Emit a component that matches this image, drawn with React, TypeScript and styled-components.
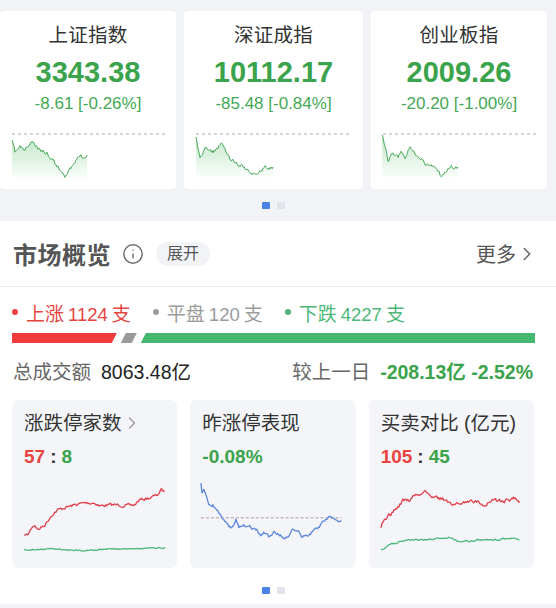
import React from "react";
import styled, { createGlobalStyle } from "styled-components";
import { ChevronRight, Info } from "lucide-react";

const GlobalStyle = createGlobalStyle`
  html, body { margin: 0; padding: 0; background: #ffffff; }
  body {
    font-family: "Liberation Sans", "Noto Sans CJK SC", sans-serif;
    -webkit-font-smoothing: antialiased;
  }
  #root { width: 556px; }
`;

type Pt = [number, number];

function buildLine(anchors: Pt[], amp: number, seed: number, step = 1): Pt[] {
  let s = seed;
  const rnd = () => {
    s = (s * 16807) % 2147483647;
    return s / 2147483647;
  };
  const pts: Pt[] = [];
  let dev = 0;
  for (let i = 0; i < anchors.length - 1; i++) {
    const [x0, y0] = anchors[i];
    const [x1, y1] = anchors[i + 1];
    const n = Math.max(1, Math.round((x1 - x0) / step));
    for (let k = 0; k < n; k++) {
      const t = k / n;
      dev = dev * 0.5 + (rnd() - 0.5) * amp;
      pts.push([x0 + (x1 - x0) * t, y0 + (y1 - y0) * t + (i === 0 && k === 0 ? 0 : dev)]);
    }
  }
  pts.push(anchors[anchors.length - 1]);
  return pts;
}

const toPath = (pts: Pt[]) =>
  "M" + pts.map((p) => `${p[0].toFixed(1)},${p[1].toFixed(1)}`).join("L");

const toArea = (pts: Pt[], bottom: number) =>
  toPath(pts) +
  `L${pts[pts.length - 1][0].toFixed(1)},${bottom}L${pts[0][0].toFixed(1)},${bottom}Z`;

/* ---------- data ---------- */

const indices = [
  {
    name: "上证指数",
    value: "3343.38",
    change: "-8.61 [-0.26%]",
    anchors: [
      [12, 10], [15, 22], [20, 17], [25, 20], [32, 12], [37, 18], [47, 23], [53, 30],
      [58, 37], [65, 45], [70, 40], [75, 33], [80, 25], [85, 27], [87, 25],
    ] as Pt[],
    seed: 11,
  },
  {
    name: "深证成指",
    value: "10112.17",
    change: "-85.48 [-0.84%]",
    anchors: [
      [12, 7], [16, 28], [21, 20], [29, 22], [34, 17], [38, 14], [46, 28], [56, 35],
      [64, 40], [68, 45], [74, 45], [78, 40], [82, 37], [86, 38], [89, 37],
    ] as Pt[],
    seed: 29,
  },
  {
    name: "创业板指",
    value: "2009.26",
    change: "-20.20 [-1.00%]",
    anchors: [
      [11, 5], [17, 30], [22, 23], [27, 28], [30, 20], [34, 27], [39, 17], [45, 25],
      [49, 28], [54, 33], [61, 35], [66, 40], [69, 45], [72, 45], [77, 38], [81, 36],
      [84, 38], [87, 37],
    ] as Pt[],
    seed: 47,
  },
];

const limitRed = buildLine(
  [
    [12, 57], [16, 57], [20, 49], [23, 47], [26, 52], [33, 47], [40, 37], [46, 32],
    [56, 29], [63, 27], [73, 25], [83, 25], [88, 28], [98, 27], [108, 27], [113, 28],
    [123, 27], [128, 22], [138, 20], [146, 17], [150, 12], [153, 14],
  ],
  2.6,
  7
);
const limitGreen = buildLine(
  [[12, 72], [40, 71], [70, 73], [100, 71], [130, 71], [154, 70]],
  1,
  13
);
const yesterdayBlue = buildLine(
  [
    [11, 5], [12, 17], [14, 12], [17, 22], [19, 27], [23, 27], [26, 32], [31, 37],
    [34, 42], [39, 50], [44, 49], [46, 41], [49, 49], [54, 47], [59, 49], [67, 52],
    [71, 57], [74, 54], [79, 59], [84, 55], [89, 57], [94, 60], [99, 57], [104, 52],
    [109, 54], [112, 59], [119, 58], [124, 52], [129, 49], [134, 44], [139, 40],
    [142, 39], [146, 40], [149, 44], [152, 43],
  ],
  2.8,
  23
);
const flowRed = buildLine(
  [
    [12, 50], [16, 42], [21, 37], [26, 32], [31, 27], [34, 22], [41, 22], [46, 17],
    [51, 17], [56, 14], [61, 17], [66, 20], [76, 22], [81, 25], [86, 27], [91, 25],
    [101, 22], [109, 24], [116, 27], [126, 22], [134, 24], [141, 22], [146, 20], [151, 25],
  ],
  3.4,
  31
);
const flowGreen = buildLine(
  [
    [12, 72], [21, 67], [31, 64], [41, 62], [61, 62], [81, 60], [91, 64], [111, 62],
    [131, 62], [141, 60], [151, 62],
  ],
  1.5,
  37
);

const breadth = { up: 1124, flat: 120, down: 4227 };

/* ---------- styles ---------- */

const Page = styled.div`
  width: 556px;
  background: #ffffff;
`;

const TopSection = styled.section`
  background: #f1f3f7;
  padding: 11px 0 12px 0;
`;

const IndexRow = styled.div`
  display: grid;
  grid-template-columns: 176px 179px 176px;
  column-gap: 8px;
`;

const IndexCard = styled.div`
  background: #ffffff;
  border-radius: 4px;
  height: 178px;
  box-sizing: border-box;
  padding-top: 10px;
  display: flex;
  flex-direction: column;
  align-items: center;
`;

const IndexName = styled.div`
  font-size: 19.5px;
  line-height: 28px;
  color: #333333;
  letter-spacing: 0.3px;
`;

const IndexValue = styled.div`
  margin-top: 5px;
  font-size: 29px;
  line-height: 36px;
  font-weight: 700;
  color: #3ba34c;
`;

const IndexChange = styled.div`
  margin-top: 3px;
  font-size: 17px;
  line-height: 22px;
  color: #44a856;
`;

const MiniChart = styled.svg`
  margin-top: 15px;
  width: 100%;
  height: 50px;
  display: block;
`;

const Dots = styled.div`
  display: flex;
  justify-content: center;
  gap: 7px;
  padding-right: 9px;
`;

const Dot = styled.span<{ $active?: boolean }>`
  width: 8px;
  height: 7px;
  border-radius: 1px;
  background: ${(p) => (p.$active ? "#4c82e6" : "#e1e4ea")};
`;

const TopDots = styled(Dots)`
  margin-top: 13px;
`;

const Overview = styled.section`
  background: #ffffff;
  padding-bottom: 10px;
`;

const Header = styled.div`
  height: 65px;
  display: flex;
  align-items: center;
  padding: 0 18px 0 13px;
  border-bottom: 1px solid #ececec;
`;

const HeaderTitle = styled.h2`
  margin: 0;
  font-size: 24px;
  font-weight: 600;
  color: #555555;
  letter-spacing: 0.5px;
`;

const InfoIcon = styled(Info)`
  margin-left: 11px;
  color: #6f6f6f;
`;

const Pill = styled.span`
  margin-left: 12px;
  height: 24px;
  padding: 0 11px;
  border-radius: 12px;
  background: #f2f3f6;
  color: #555555;
  font-size: 16px;
  line-height: 24px;
`;

const More = styled.span`
  margin-left: auto;
  display: flex;
  align-items: center;
  font-size: 20px;
  color: #555555;
`;

const Stats = styled.div`
  margin-top: 13px;
  height: 24px;
  display: flex;
  align-items: center;
  gap: 22px;
  padding-left: 12px;
`;

const StatItem = styled.span<{ $color: string }>`
  display: flex;
  align-items: center;
  gap: 8px;
  font-size: 19px;
  color: ${(p) => p.$color};
  &::before {
    content: "";
    width: 6px;
    height: 6px;
    border-radius: 50%;
    background: ${(p) => p.$color};
  }
`;

const StatCount = styled.span`
  font-family: "Liberation Sans", "Noto Sans", sans-serif;
  font-size: 18.5px;
  margin: 0 4px;
`;

const Bar = styled.div`
  margin: 9px 21px 0 12px;
  height: 10px;
  display: flex;
  gap: 4px;
`;

const Seg = styled.div<{ $color: string; $shape: "start" | "mid" | "end"; $grow: number }>`
  flex: ${(p) => p.$grow} 1 0;
  min-width: 16px;
  background: ${(p) => p.$color};
  clip-path: ${(p) =>
    p.$shape === "start"
      ? "polygon(0 0, 100% 0, calc(100% - 5px) 100%, 0 100%)"
      : p.$shape === "mid"
      ? "polygon(5px 0, 100% 0, calc(100% - 5px) 100%, 0 100%)"
      : "polygon(5px 0, 100% 0, 100% 100%, 0 100%)"};
`;

const Turnover = styled.div`
  margin-top: 15px;
  height: 24px;
  display: flex;
  align-items: center;
  justify-content: space-between;
  padding: 0 23px 0 13px;
  font-size: 19.5px;
`;

const Group = styled.span`
  display: flex;
  align-items: center;
  gap: 10px;
`;

const Label = styled.span`
  color: #666666;
`;

const Amount = styled.span<{ $color?: string }>`
  color: ${(p) => p.$color || "#222222"};
  font-weight: ${(p) => (p.$color ? 600 : 400)};
`;

const CardRow = styled.div`
  margin-top: 18px;
  display: grid;
  grid-template-columns: repeat(3, 1fr);
  column-gap: 13px;
  padding: 0 22px 0 12px;
`;

const StatCard = styled.div`
  background: #f3f5f9;
  border-radius: 6px;
  padding: 10px 0 10px 0;
  display: flex;
  flex-direction: column;
`;

const CardTitle = styled.div`
  display: flex;
  align-items: center;
  padding-left: 12px;
  font-size: 19.5px;
  line-height: 26px;
  color: #333333;
`;

const CardValue = styled.div`
  margin-top: 9px;
  padding-left: 12px;
  font-size: 19px;
  line-height: 24px;
  font-weight: 700;
`;

const Num = styled.span<{ $color: string }>`
  color: ${(p) => p.$color};
`;

const Colon = styled.span`
  color: #333333;
  margin: 0 5px;
`;

const CardChart = styled.svg`
  margin-top: 9px;
  width: 100%;
  height: 80px;
  display: block;
`;

const BottomDots = styled(Dots)`
  margin-top: 19px;
`;

const BottomStrip = styled.div`
  height: 4px;
  background: #f1f3f6;
`;

/* ---------- components ---------- */

function IndexTile({ item, idx }: { item: (typeof indices)[number]; idx: number }) {
  const pts = buildLine(item.anchors, 3.2, item.seed, 0.8);
  const gid = `grad${idx}`;
  return (
    <IndexCard>
      <IndexName>{item.name}</IndexName>
      <IndexValue>{item.value}</IndexValue>
      <IndexChange>{item.change}</IndexChange>
      <MiniChart viewBox="0 0 176 50" preserveAspectRatio="xMinYMin meet">
        <defs>
          <linearGradient id={gid} x1="0" y1="0" x2="0" y2="1">
            <stop offset="0" stopColor="#5cbf6c" stopOpacity="0.36" />
            <stop offset="1" stopColor="#5cbf6c" stopOpacity="0.03" />
          </linearGradient>
        </defs>
        <line x1="12" y1="4" x2="165" y2="4" stroke="#a9a9a9" strokeWidth="1" strokeDasharray="3 3" />
        <path d={toArea(pts, 47)} fill={`url(#${gid})`} />
        <path d={toPath(pts)} fill="none" stroke="#46a957" strokeWidth="1" strokeLinejoin="round" />
      </MiniChart>
    </IndexCard>
  );
}

export default function App() {
  return (
    <Page>
      <GlobalStyle />
      <TopSection>
        <IndexRow>
          {indices.map((it, i) => (
            <IndexTile key={it.name} item={it} idx={i} />
          ))}
        </IndexRow>
        <TopDots>
          <Dot $active />
          <Dot />
        </TopDots>
      </TopSection>

      <Overview>
        <Header>
          <HeaderTitle>市场概览</HeaderTitle>
          <InfoIcon size={22} strokeWidth={1.6} />
          <Pill>展开</Pill>
          <More>
            更多
            <ChevronRight size={22} strokeWidth={1.6} color="#666666" />
          </More>
        </Header>

        <Stats>
          <StatItem $color="#e8443f">
            <span>
              上涨<StatCount>{breadth.up}</StatCount>支
            </span>
          </StatItem>
          <StatItem $color="#9b9b9b">
            <span>
              平盘<StatCount>{breadth.flat}</StatCount>支
            </span>
          </StatItem>
          <StatItem $color="#4cb878">
            <span>
              下跌<StatCount>{breadth.down}</StatCount>支
            </span>
          </StatItem>
        </Stats>

        <Bar>
          <Seg $color="#ee3b3b" $shape="start" $grow={breadth.up} />
          <Seg $color="#9a9a9a" $shape="mid" $grow={0} />
          <Seg $color="#45b76f" $shape="end" $grow={breadth.down} />
        </Bar>

        <Turnover>
          <Group>
            <Label>总成交额</Label>
            <Amount>8063.48亿</Amount>
          </Group>
          <Group>
            <Label>较上一日</Label>
            <Amount $color="#3aa34b">-208.13亿 -2.52%</Amount>
          </Group>
        </Turnover>

        <CardRow>
          <StatCard>
            <CardTitle>
              涨跌停家数
              <ChevronRight size={20} strokeWidth={1.5} color="#999999" />
            </CardTitle>
            <CardValue>
              <Num $color="#e8443f">57</Num>
              <Colon>:</Colon>
              <Num $color="#3aa34b">8</Num>
            </CardValue>
            <CardChart viewBox="0 0 166 80" preserveAspectRatio="xMinYMin meet">
              <path d={toPath(limitRed)} fill="none" stroke="#e0404c" strokeWidth="1.3" strokeLinejoin="round" />
              <path d={toPath(limitGreen)} fill="none" stroke="#4cb97a" strokeWidth="1.3" strokeLinejoin="round" />
            </CardChart>
          </StatCard>

          <StatCard>
            <CardTitle>昨涨停表现</CardTitle>
            <CardValue>
              <Num $color="#3aa34b">-0.08%</Num>
            </CardValue>
            <CardChart viewBox="0 0 166 80" preserveAspectRatio="xMinYMin meet">
              <line x1="11" y1="40" x2="152" y2="40" stroke="#b59a9a" strokeWidth="1" strokeDasharray="3 2" />
              <path d={toPath(yesterdayBlue)} fill="none" stroke="#5a86dc" strokeWidth="1.3" strokeLinejoin="round" />
            </CardChart>
          </StatCard>

          <StatCard>
            <CardTitle>买卖对比 (亿元)</CardTitle>
            <CardValue>
              <Num $color="#e8443f">105</Num>
              <Colon>:</Colon>
              <Num $color="#3aa34b">45</Num>
            </CardValue>
            <CardChart viewBox="0 0 166 80" preserveAspectRatio="xMinYMin meet">
              <path d={toPath(flowRed)} fill="none" stroke="#e0404c" strokeWidth="1.3" strokeLinejoin="round" />
              <path d={toPath(flowGreen)} fill="none" stroke="#4cb97a" strokeWidth="1.3" strokeLinejoin="round" />
            </CardChart>
          </StatCard>
        </CardRow>

        <BottomDots>
          <Dot $active />
          <Dot />
        </BottomDots>
      </Overview>
      <BottomStrip />
    </Page>
  );
}
